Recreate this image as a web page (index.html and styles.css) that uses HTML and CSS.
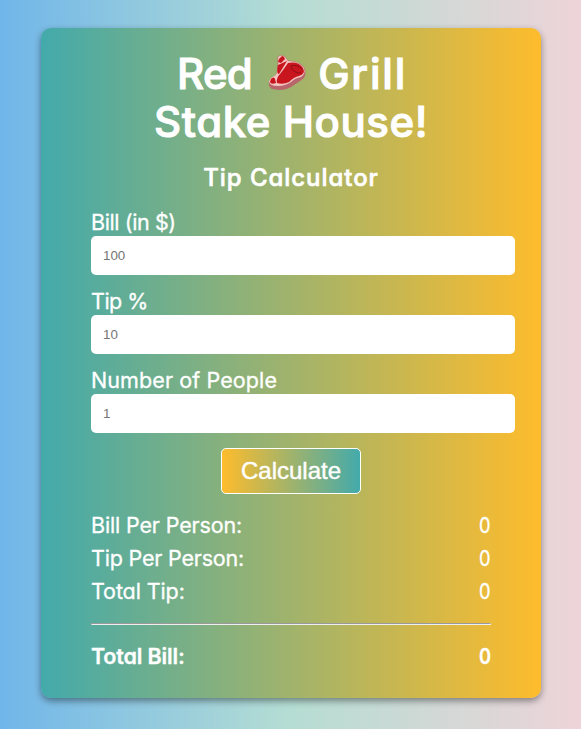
FILE: index.html
```html
<!DOCTYPE html>
<html lang="en">
<head>
<meta charset="utf-8">
<title>Tip Calculator</title>
<link rel="stylesheet" href="styles.css">
</head>
<body>
<main class="card">
  <h1 class="title">
    <span class="title-line"><span class="red">Red</span>
      <svg class="steak" viewBox="0 0 38 38" aria-hidden="true">
        <path fill="#b8666b" d="M9.500 3Q12 0 17 2.500L20 6.500Q31 7 36 13Q39 19 36 24Q31 28 26 31Q20 36 11 36L4 35Q0 33 1 27Q3 23 8 21Q10 15 9.500 3Z"/>
        <path fill="#f2c5c0" d="M10 3Q13 0 17 3L20 7Q31 7 36 14Q38 20 33 23Q27 24 23 28Q17 32 10 32Q1 32 1 27Q3 23 8 21Q11 15 10 3Z"/>
        <path fill="#c9151d" d="M14 2Q16 2 17 5L13 9L10 8Q11 4 14 2ZM10 11L19 7L11 20Q8 20 10 11ZM20 9Q30 7 35 14Q38 20 31 22Q26 23 21 28Q15 31 9 29Q8 24 12 20Q16 15 20 9ZM3 25Q6 22 7 25L8 29Q3 31 2 28Z"/>
        <path fill="none" stroke="#8f0e18" stroke-width="1" d="M23 12Q24 19 33 19M23 12Q29 10 34 15"/>
      </svg>
      <span class="grill">Grill</span></span>
    <span class="title-line stake">Stake House!</span>
  </h1>
  <h2 class="subtitle">Tip Calculator</h2>
  <form class="form">
    <label class="label bill" for="bill">Bill (in $)</label>
    <input class="input" id="bill" placeholder="100">
    <label class="label tip" for="tip">Tip %</label>
    <input class="input" id="tip" placeholder="10">
    <label class="label people" for="people">Number of People</label>
    <input class="input" id="people" placeholder="1">
    <button class="button" type="button">Calculate</button>
  </form>
  <section class="results">
    <div class="row"><span class="per-bill">Bill Per Person:</span><span class="value">0</span></div>
    <div class="row"><span class="per-tip">Tip Per Person:</span><span class="value">0</span></div>
    <div class="row"><span class="total-tip">Total Tip:</span><span class="value">0</span></div>
    <hr class="rule">
    <div class="row total"><span class="total-bill">Total Bill:</span><span class="value">0</span></div>
  </section>
</main>
</body>
</html>
```
FILE: styles.css
```css
* { box-sizing: border-box; }
body {
  margin: 0;
  height: 729px;
  padding: 28px 40px 0 41px;
  overflow: hidden;
  background: linear-gradient(to right, #70b6ea, #b5ddd3 50%, #eed4d9);
  color: #fff;
  font-family: Inter, "Liberation Sans", sans-serif;
  font-feature-settings: "cv11";
  font-size: 21.5px;
}
.card {
  width: 500px;
  height: 670px;
  padding: 22px 50px 0;
  border-radius: 10px;
  background: linear-gradient(to right, #43aaab, #febc2c);
  box-shadow: 0 3px 7px rgba(0, 0, 0, .42);
}
.title {
  margin: 0;
  font-size: 42px;
  font-weight: 500;
  line-height: 48px;
  -webkit-text-stroke: 1px #fff;
}
.title-line {
  display: flex;
  justify-content: center;
  height: 48px;
  white-space: nowrap;
}
.red { letter-spacing: -.7px; }
.grill { letter-spacing: 1.8px; margin-right: -2px; }
.stake { letter-spacing: .55px; }
.steak { width: 38px; height: 38px; margin: 4px 12px 0 16px; }
.subtitle {
  margin: 17px 0 15px;
  font-size: 24px;
  font-weight: 500;
  line-height: 30px;
  letter-spacing: .95px;
  text-align: center;
  -webkit-text-stroke: .6px #fff;
}
.form { display: flex; flex-direction: column; align-items: flex-start; }
.label { height: 28px; line-height: 28px; white-space: nowrap; }
.bill { letter-spacing: -.4px; }
.tip { letter-spacing: -.5px; }
.people { letter-spacing: .1px; }
.input {
  width: 424px;
  height: 39px;
  margin: 0 0 12px;
  padding: 0 12px;
  border: 0;
  border-radius: 5px;
  background: #fff;
  font: 13.333px "Liberation Sans", Arial, sans-serif;
}
.input::placeholder { color: #757575; }
.label, .row { -webkit-text-stroke: .3px #fff; }
.button {
  align-self: center;
  width: 140px;
  height: 46px;
  margin-top: 3px;
  padding: 0;
  border: 1px solid #fff;
  border-radius: 5px;
  background: linear-gradient(to right, #febc2c, #43aaab);
  color: #fff;
  font: 24px "Liberation Sans", Arial, sans-serif;
  -webkit-text-stroke: .4px #fff;
}
.results { padding-top: 15px; }
.row { display: flex; justify-content: space-between; line-height: 33px; white-space: nowrap; }
.per-bill { letter-spacing: -.15px; }
.per-tip { letter-spacing: -.2px; }
.total-tip { letter-spacing: -.1px; }
.value { transform: scaleX(.85); transform-origin: right; }
.rule { margin: 15px 0 15px; border: 1px inset #eee; }
.total { font-weight: 600; letter-spacing: -.15px; }
```
